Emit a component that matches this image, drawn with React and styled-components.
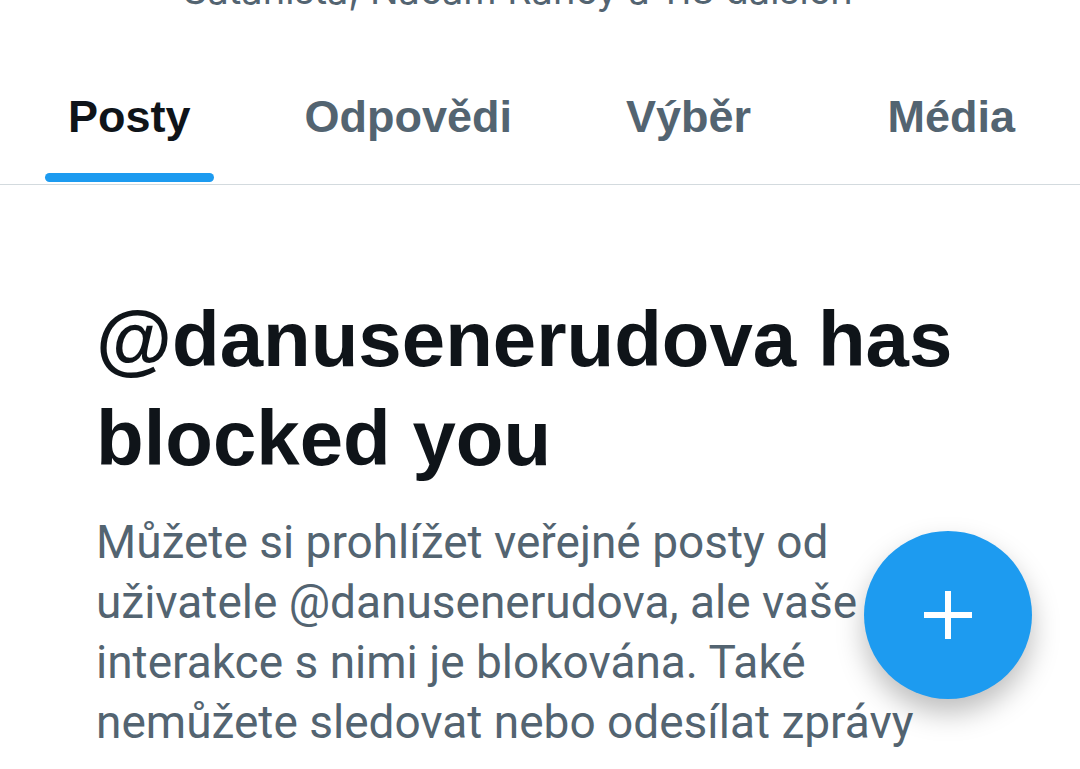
import React from "react";
import styled, { createGlobalStyle } from "styled-components";

const Global = createGlobalStyle`
  *, *::before, *::after { box-sizing: border-box; }
  html, body { margin: 0; background: #fff; }
  body { font-family: Roboto, "Liberation Sans", sans-serif; color: #0f1419; overflow: hidden; }
`;

const Page = styled.div`
  height: 100vh;
  overflow: hidden;
  background: #fff;
`;

const Followers = styled.div`
  height: 48px;
  padding-left: 183px;
  overflow: hidden;
`;

const FollowersText = styled.p`
  margin: -38px 0 0;
  font-family: Inter, sans-serif;
  font-size: 38px;
  line-height: 56px;
  white-space: nowrap;
  color: #536471;
`;

const Tabs = styled.nav`
  display: flex;
  gap: 68px;
  height: 137px;
  padding: 0 42px 0 45px;
  border-bottom: 1px solid #d3dade;
`;

const Tab = styled.button`
  display: flex;
  flex-direction: column;
  justify-content: space-between;
  padding: 39px 0 2px;
  border: 0;
  background: none;
  font-family: "Liberation Sans", sans-serif;
  font-size: 45px;
  font-weight: 700;
  line-height: 60px;
  color: ${(p) => (p.$active ? "#0f1419" : "#536471")};

  &:last-child { margin-left: auto; }
`;

const TabLabel = styled.span`
  padding: 0 23px;
`;

const Indicator = styled.span`
  align-self: stretch;
  height: 9px;
  border-radius: 5px;
  background: #1d9bf0;
`;

const Notice = styled.main`
  padding: 105px 96px 0;
`;

const Title = styled.h1`
  margin: 0;
  font-family: "Liberation Sans", sans-serif;
  font-size: 78px;
  font-weight: 700;
  line-height: 99px;
`;

const Body = styled.p`
  margin: 24px 0 0;
  font-size: 46px;
  line-height: 60px;
  color: #536471;
`;

const Line = styled.span`
  display: block;
  white-space: nowrap;
`;

const Compose = styled.button`
  position: fixed;
  right: 48px;
  bottom: 70px;
  display: grid;
  place-items: center;
  width: 168px;
  height: 168px;
  padding: 0;
  border: 0;
  border-radius: 50%;
  background: #1d9bf0;
  box-shadow: 0 14px 28px rgba(0, 0, 0, 0.26);
`;

const tabs = ["Posty", "Odpovědi", "Výběr", "Média"];

export default function App() {
  return (
    <Page>
      <Global />
      <Followers>
        <FollowersText>Satanista, Nácam Rancy a 118 dalších</FollowersText>
      </Followers>
      <Tabs>
        {tabs.map((t, i) => (
          <Tab key={t} type="button" $active={i === 0}>
            <TabLabel>{t}</TabLabel>
            {i === 0 && <Indicator />}
          </Tab>
        ))}
      </Tabs>
      <Notice>
        <Title>
          <Line>@danusenerudova has</Line>
          <Line>blocked you</Line>
        </Title>
        <Body>
          <Line>Můžete si prohlížet veřejné posty od</Line>
          <Line>uživatele @danusenerudova, ale vaše</Line>
          <Line>interakce s nimi je blokována. Také</Line>
          <Line>nemůžete sledovat nebo odesílat zprávy</Line>
        </Body>
      </Notice>
      <Compose type="button" aria-label="Nový post">
        <svg width="48" height="48" viewBox="0 0 48 48" aria-hidden="true">
          <path d="M24 0v48M0 24h48" stroke="#fff" strokeWidth="6" />
        </svg>
      </Compose>
    </Page>
  );
}
